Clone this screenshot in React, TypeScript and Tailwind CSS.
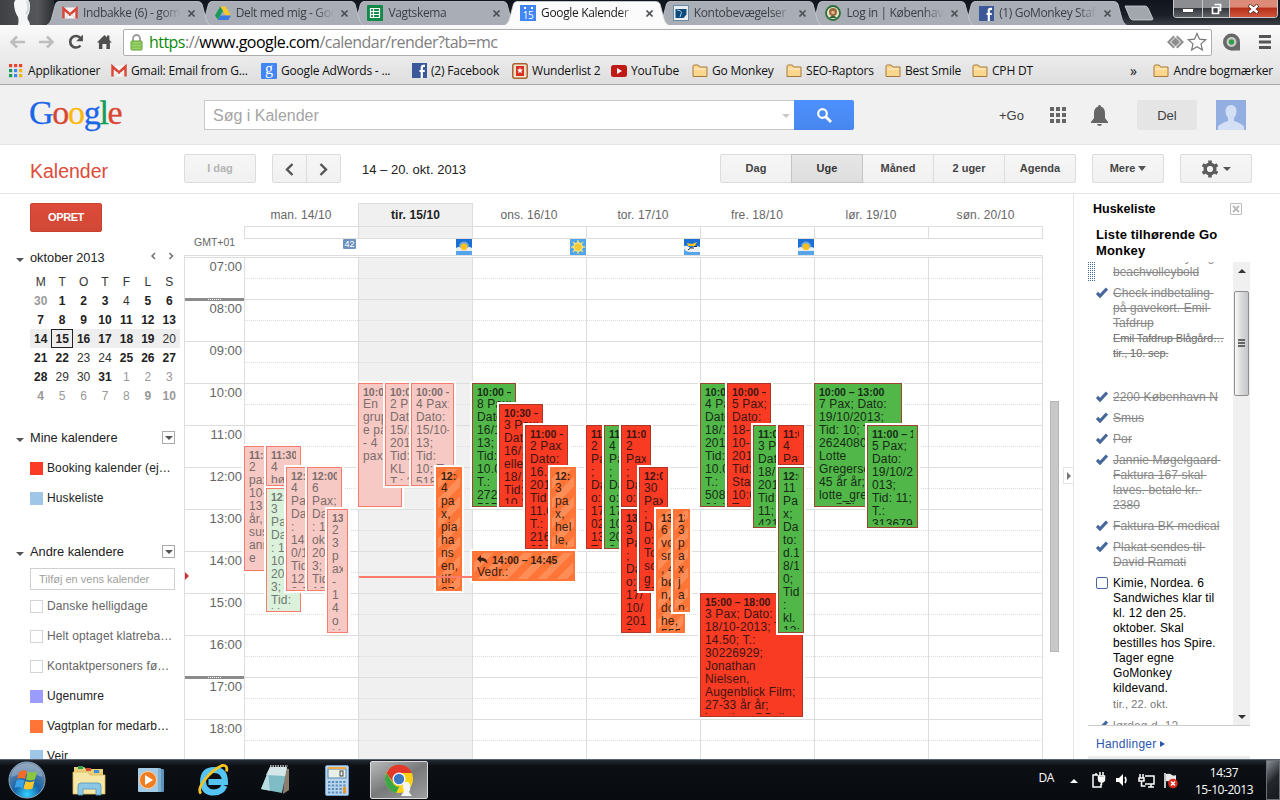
import React from "react";

type Kids = { children?: React.ReactNode };

/* ---------- small icons ---------- */

const Gmail = () => (
  <svg width="16" height="16" viewBox="0 0 16 16">
    <rect x="1" y="2.5" width="14" height="11" fill="#f4f4f4" />
    <path d="M1.500 13.500V3.500L8 9.500l6.500-6v10" fill="none" stroke="#d94537" strokeWidth="2.400" />
    <path d="M3 13l4-4M13 13L9 9" stroke="#ccc" strokeWidth="0.800" />
  </svg>
);
const Drive = () => (
  <svg width="16" height="16" viewBox="0 0 16 16">
    <path d="M5.300 1.500h5.200L16 10.500h-5.300z" fill="#fbc82b" />
    <path d="M5.300 1.500L8 6 2.800 14.800 0 10.300z" fill="#1c9a59" />
    <path d="M5.500 10.500H16l-2.700 4.400H2.800z" fill="#3b78e0" />
  </svg>
);
const Sheets = () => (
  <svg width="16" height="16" viewBox="0 0 16 16">
    <rect width="16" height="16" rx="1" fill="#0f8a47" />
    <path d="M3.500 3.500h9v9h-9zM3.500 6.500h9M3.500 9.500h9M6.500 3.500v9" fill="none" stroke="#fff" strokeWidth="1.200" />
  </svg>
);
const CalIcon = () => (
  <div className="flex h-4 w-4 flex-col items-center bg-[#4285f4] text-white">
    <div className="mt-[2px] flex gap-[5px]">
      <i className="h-[2px] w-[2px] bg-white" />
      <i className="h-[2px] w-[2px] bg-white" />
    </div>
    <span className="text-[10px] leading-[12px] tracking-[-0.300px]">15</span>
  </div>
);
const Konto = () => (
  <svg width="16" height="16" viewBox="0 0 16 16">
    <rect x="0.500" y="0.500" width="15" height="15" fill="#e8eef2" stroke="#6b8ba3" />
    <path d="M2.500 4h11v5.500l-3 3.500h-8z" fill="#0c4a7d" />
    <path d="M4 5q4 0 4.500 2.500L7 12" stroke="#bcd3e4" strokeWidth="0.900" fill="none" />
  </svg>
);
const Login = () => (
  <svg width="16" height="16" viewBox="0 0 16 16">
    <circle cx="8" cy="8" r="7" fill="#e9e2c8" stroke="#2c6e3c" strokeWidth="1.800" />
    <circle cx="8" cy="7" r="4" fill="#9a6a3c" />
    <path d="M4 13q4-5 8 0z" fill="#39633c" />
    <circle cx="8" cy="7.500" r="1.800" fill="#e4b88c" />
  </svg>
);
const Facebook = () => (
  <svg width="15" height="15" viewBox="0 0 15 15">
    <rect width="15" height="15" fill="#3b5998" />
    <path d="M13 2.800h-1.500q-1.700 0-1.700 1.700V15M7.500 8h5.300" fill="none" stroke="#fff" strokeWidth="2.200" />
  </svg>
);
const Folder = () => (
  <svg width="16" height="14" viewBox="0 0 16 14">
    <path d="M1 2.500Q1 1 2.200 1h4l1.500 2H15v9.500H1z" fill="#fcd68c" stroke="#a87b3f" />
    <path d="M2 5h12" stroke="#fff2d0" />
  </svg>
);
const AppsDots = () => (
  <svg width="14" height="14" viewBox="0 0 14 14">
    {["#e8432f", "#e8432f", "#e8432f", "#0f9d58", "#4285f4", "#f4b400", "#0f9d58", "#4285f4", "#f4b400"].map((c, i) => (
      <rect key={i} x={(i % 3) * 5} y={Math.floor(i / 3) * 5} width="3.200" height="3.200" fill={c} />
    ))}
  </svg>
);
const Adwords = () => (
  <div className="flex h-4 w-4 items-center justify-center rounded-[1px] bg-[#4285f4] font-['Liberation_Serif',serif] text-[16px] leading-none text-white">
    <span className="-mt-[3px]">g</span>
  </div>
);
const Wunder = () => (
  <svg width="16" height="16" viewBox="0 0 16 16">
    <rect x="0.800" y="0.800" width="14.400" height="14.400" rx="2" fill="#f3e3cf" stroke="#a8622f" strokeWidth="1.500" />
    <rect x="4" y="3" width="8" height="10" fill="#d9301f" />
    <path d="M8 4.500l.9 2 2.100.1-1.600 1.400.5 2.200L8 9l-1.900 1.200.5-2.200L5 6.600l2.100-.1z" fill="#fff" />
  </svg>
);
const Youtube = () => (
  <svg width="16" height="14" viewBox="0 0 16 14">
    <rect y="1" width="16" height="12" rx="2.500" fill="#c01a17" />
    <path d="M6 4l5 3-5 3z" fill="#fff" />
  </svg>
);
const Weather = ({ kind }: { kind: "sun" | "haze" | "cloud" }) => (
  <svg width="16" height="16" viewBox="0 0 16 16" className="absolute right-0 top-0">
    <rect width="16" height="16" fill={kind === "sun" ? "#4fa6ea" : "#1b6fd6"} />
    <rect y="11" width="16" height="5" fill="#56a5ea" />
    {kind === "sun" && (
      <g>
        <rect y="10" width="16" height="6" fill="#4fa6ea" />
        <path d="M8 1v14M1 8h14M3 3l10 10M13 3L3 13" stroke="#f7dd62" strokeWidth="1.300" />
        <circle cx="8" cy="8" r="4.300" fill="#f9c936" stroke="#fff0a0" />
      </g>
    )}
    {kind === "haze" && (
      <g>
        <circle cx="8" cy="7.500" r="5" fill="#6fa8d8" />
        <path d="M0 9q3-2 5 0h6q2-2 5 0v3H0z" fill="#e8edf0" />
        <circle cx="8" cy="7.800" r="3.400" fill="#fcbf1c" />
      </g>
    )}
    {kind === "cloud" && (
      <g>
        <path d="M3 4l5 1 5-2-2 4H4z" fill="#fcc41c" />
        <path d="M0 7q3-1 5 1 2 2 4 0 3-2 7 0v5H5Q1 12 0 10z" fill="#eef0f2" />
        <path d="M4 11q2-3 6-2M10 7.500h3" stroke="#26343f" fill="none" />
      </g>
    )}
  </svg>
);

/* ---------- browser chrome ---------- */

const tabs = [
  { t: "Indbakke (6) - gomonkey", i: <Gmail /> },
  { t: "Delt med mig - Google", i: <Drive /> },
  { t: "Vagtskema", i: <Sheets /> },
  { t: "Google Kalender", i: <CalIcon />, active: true },
  { t: "Kontobevægelser | Ny", i: <Konto /> },
  { t: "Log in | København K", i: <Login /> },
  { t: "(1) GoMonkey Staff", i: <Facebook /> },
];
const tabZ = ["z-[7]", "z-[6]", "z-[5]", "z-[9]", "z-[4]", "z-[3]", "z-[2]"];

function TabStrip() {
  return (
    <div className="flex h-[25px] shrink-0 bg-[linear-gradient(#10141d,#1a1e27_60%,#3a3f46)] font-['Open_Sans',sans-serif]">
      <div className="h-full w-[54px] bg-[linear-gradient(90deg,#3f4144,#55575a_70%,#2a2d31)]">
        <svg width="54" height="25" viewBox="0 0 54 25">
          <path d="M14 3Q15-2 22-2q8 0 8 7 0 8-2 10-1 3 0 5 2 2 2 5H18q1-5 0-8-4-6-4-14z" fill="#f4f6f8" />
          <path d="M27 1q3 8-1 13" stroke="#cfd6dc" strokeWidth="2" fill="none" />
        </svg>
      </div>
      {tabs.map((tab, n) => (
        <div key={n} className={`relative flex h-[25px] w-[152.700px] items-center ${tabZ[n]}`}>
          <svg className="absolute -left-[7px] top-0" width="164" height="25" viewBox="0 0 164 25">
            <path
              d="M0 25Q3 24 4.500 19L8.500 4Q9.500 1.500 12 1.500H151Q154 1.500 155 4L159 19Q160.500 24 163.500 25"
              fill={tab.active ? "#fbfbfb" : "#a9aeb6"}
              stroke={tab.active ? "#d7d9dc" : "#c9cdd2"}
              strokeWidth="0.800"
            />
          </svg>
          <div className="relative ml-2 mt-[1px] flex h-4 w-4 items-center justify-center">{tab.i}</div>
          <div
            className={`relative ml-[5px] mt-[1px] w-[98px] overflow-hidden whitespace-nowrap text-[12px] tracking-[-0.350px] [mask-image:linear-gradient(90deg,#000_80%,transparent)] ${n === 4 ? "tracking-[-0.200px]" : ""} ${tab.active ? "text-[#1a1a1a]" : "text-[#3b3e44]"}`}
          >
            {tab.t}
          </div>
          <svg className="relative ml-[6px] mt-[2px]" width="9" height="9" viewBox="0 0 9 9">
            <path d="M1.500 1.500l6 6M7.500 1.500l-6 6" stroke="#4a4d52" strokeWidth="1.700" />
          </svg>
        </div>
      ))}
      <svg className="-ml-px mt-[5px]" width="36" height="16" viewBox="0 0 36 16">
        <path d="M3 1h20q2 0 3 2l5 11q0 1-2 1H11q-2 0-3-2z" fill="#a2a7ae" stroke="#d0d3d7" strokeWidth="0.800" />
      </svg>
      <div className="ml-auto mr-[2px] flex h-[18px] overflow-hidden rounded-b-[4px] border border-t-0 border-[#c5c7ca]">
        <div className="flex w-[29px] items-center justify-center border-r border-[#c5c7ca] bg-[linear-gradient(#8b8d91_45%,#33363b_50%,#5f6266)]">
          <i className="mt-[3px] h-[5px] w-[12px] rounded-[1px] border border-[#444] bg-white" />
        </div>
        <div className="flex w-[27px] items-center justify-center border-r border-[#c5c7ca] bg-[linear-gradient(#8b8d91_45%,#33363b_50%,#5f6266)]">
          <svg width="13" height="12" viewBox="0 0 13 12">
            <path d="M4.500 1.500h6v6h-2M2.500 4.500h6v6h-6z" fill="none" stroke="#fff" strokeWidth="1.700" />
          </svg>
        </div>
        <div className="flex w-[47px] items-center justify-center bg-[linear-gradient(#dd8b78_40%,#b8301a_50%,#d1553c)]">
          <svg width="13" height="10" viewBox="0 0 13 10">
            <path d="M2 1l9 8M11 1L2 9" stroke="#5c2b22" strokeWidth="4" />
            <path d="M2.500 1.500l8 7M10.500 1.500l-8 7" stroke="#fff" strokeWidth="2.400" />
          </svg>
        </div>
      </div>
    </div>
  );
}

const bookmarks = [
  { t: "Applikationer", i: <AppsDots />, w: "w-[103px]" },
  { t: "Gmail: Email from G...", i: <Gmail />, w: "w-[150px]" },
  { t: "Google AdWords - ...", i: <Adwords />, w: "w-[150px]" },
  { t: "(2) Facebook", i: <Facebook />, w: "w-[101px]" },
  { t: "Wunderlist 2", i: <Wunder />, w: "w-[99px]" },
  { t: "YouTube", i: <Youtube />, w: "w-[81px]" },
  { t: "Go Monkey", i: <Folder />, w: "w-[94px]" },
  { t: "SEO-Raptors", i: <Folder />, w: "w-[99px]" },
  { t: "Best Smile", i: <Folder />, w: "w-[87px]" },
  { t: "CPH DT", i: <Folder />, w: "w-[90px]" },
];

function Toolbar() {
  return (
    <div className="h-[60px] shrink-0 border-b border-[#a6a6a6] bg-[linear-gradient(#fafafa,#dedede)] font-['Open_Sans',sans-serif]">
      <div className="flex h-[34px] items-center">
        <svg className="ml-[8px]" width="108" height="20" viewBox="0 0 108 20">
          <path d="M17 10H4M9 4.500L3.500 10 9 15.500" fill="none" stroke="#bdbdbd" strokeWidth="2.500" />
          <path d="M31 10h13M39 4.500l5.500 5.500-5.500 5.500" fill="none" stroke="#bdbdbd" strokeWidth="2.500" />
          <path d="M72.500 13.500a5.800 5.800 0 1 1 0-7.500" fill="none" stroke="#4f4f4f" strokeWidth="2.600" />
          <path d="M75 2.500v6.700h-6.700z" fill="#4f4f4f" />
          <path d="M89 10.500L96.500 3l2.500 2.500V3.500h2.500V8l2.500 2.500H102V17h-3.500v-5h-4v5H91v-6.500z" fill="#4f4f4f" />
        </svg>
        <div className="ml-[7px] flex h-[27px] w-[1090px] items-center rounded-[2px] border border-[#aeaeae] bg-white">
          <svg className="ml-[6px]" width="13" height="17" viewBox="0 0 13 17">
            <path d="M3 8V4.500a3.500 3.500 0 0 1 7 0V8" fill="none" stroke="#9a9a9a" strokeWidth="1.800" />
            <rect x="1" y="7" width="11" height="9" rx="1" fill="#9bd36a" stroke="#5d9d36" />
            <path d="M2 10h9M2 13h9" stroke="#76b848" />
          </svg>
          <div className="ml-[6px] whitespace-nowrap text-[16px] leading-5 tracking-[-0.520px] text-[#808080]">
            <span className="text-[#0b8a0b]">https</span>://<span className="text-black">www.google.com</span>/calendar/render?tab=mc
          </div>
          <svg className="ml-auto mr-px" width="44" height="20" viewBox="0 0 44 20">
            <path d="M7.500 3.500L1 10l6.500 6.500L9 15l-5-5 5-5z" fill="#8d8d8d" />
            <path d="M11.500 3.500L18 10l-6.500 6.500L10 15l5-5-5-5z" fill="#8d8d8d" />
            <path d="M9.500 5.500L14 10l-4.500 4.500L5 10z" fill="#8d8d8d" />
            <path d="M31 1.500l2.500 5.700 6.200.6-4.700 4.100 1.400 6.100-5.400-3.200-5.400 3.200 1.400-6.100-4.700-4.100 6.200-.6z" fill="#fff" stroke="#777" strokeWidth="1.200" />
          </svg>
        </div>
        <svg className="ml-[10px]" width="58" height="20" viewBox="0 0 58 20">
          <circle cx="9.500" cy="10" r="8.500" fill="#686868" />
          <path d="M12 10h6v8.500H9z" fill="#686868" />
          <circle cx="9.500" cy="10" r="5" fill="#c9c9c9" />
          <circle cx="9.500" cy="10" r="2.700" fill="#2f9e46" />
          <path d="M37 4.500h12M37 10h12M37 15.500h12" stroke="#555" strokeWidth="3" />
        </svg>
      </div>
      <div className="flex h-[23px] items-center pl-[8px] text-[12px] tracking-[-0.200px] text-[#111]">
        {bookmarks.map((b) => (
          <div key={b.t} className={`flex shrink-0 items-center whitespace-nowrap ${b.w}`}>
            <span className="flex w-[16px] justify-center">{b.i}</span>
            <span className="ml-[4px]">{b.t}</span>
          </div>
        ))}
        <span className="ml-[68px] text-[14px]">»</span>
        <span className="ml-auto flex items-center whitespace-nowrap pr-[7px]">
          <Folder />
          <span className="ml-[5px]">Andre bogmærker</span>
        </span>
      </div>
    </div>
  );
}

/* ---------- Google header ---------- */

function Header() {
  return (
    <div className="flex h-[60px] shrink-0 items-start border-b border-[#e5e5e5] bg-[#f1f1f1] text-[13px] text-[#404040]">
      <div className="ml-[29px] mt-[6px] w-[175px] font-['Liberation_Serif',serif] text-[34px] leading-[44px] tracking-[-1.300px] [-webkit-text-stroke:0.300px]">
        <span className="text-[#1b66e8]">G</span>
        <span className="text-[#da4531]">o</span>
        <span className="text-[#fbb80b]">o</span>
        <span className="text-[#1b66e8]">g</span>
        <span className="text-[#0f9d58]">l</span>
        <span className="text-[#da4531]">e</span>
      </div>
      <div className="mt-[15px] flex h-[30px] w-[590px] items-center border border-r-0 border-[#c8c8c8] bg-white pl-[8px] pt-px text-[16px] text-[#a5a5a5]">
        Søg i Kalender
        <i className="ml-auto mr-[4px] border-x-[4px] border-t-[4px] border-x-transparent border-t-[#c8c8c8]" />
      </div>
      <div className="mt-[15px] flex h-[30px] w-[60px] items-center justify-center rounded-r-[2px] bg-[linear-gradient(#4d90fe,#4787ed)]">
        <svg width="17" height="17" viewBox="0 0 17 17">
          <circle cx="6.500" cy="6.500" r="4.300" fill="none" stroke="#fff" strokeWidth="2.200" />
          <path d="M9.500 9.500l5.500 5.500" stroke="#fff" strokeWidth="2.800" />
        </svg>
      </div>
      <span className="ml-[145px] mt-[23px] leading-4">+Go</span>
      <svg className="ml-[26px] mt-[22px]" width="16" height="16" viewBox="0 0 16 16" fill="#666">
        {[0, 1, 2, 3, 4, 5, 6, 7, 8].map((i) => (
          <rect key={i} x={(i % 3) * 6} y={Math.floor(i / 3) * 6} width="4" height="4" />
        ))}
      </svg>
      <svg className="ml-[24px] mt-[20px]" width="19" height="22" viewBox="0 0 19 22" fill="#666">
        <path d="M9.500 0q1.500 0 1.600 1.800Q15 3 15 8v5l3 4v1H1v-1l3-4V8q0-5 3.900-6.200Q8 0 9.500 0zM7 19h5q-.5 2-2.500 2T7 19z" />
      </svg>
      <div className="ml-[28px] mt-[15px] flex h-[30px] w-[60px] items-center justify-center rounded-[2px] bg-[#e5e5e5] pt-px">Del</div>
      <svg className="ml-[19px] mt-[15px]" width="30" height="30" viewBox="0 0 30 30">
        <rect width="30" height="30" fill="#93aee0" />
        <path d="M15 5q5.500 0 5.500 6.500 0 4-2.500 6.500v3q7 2 10 5.500V30H2v-3.500Q5 23 12 21v-3q-2.500-2.500-2.500-6.500Q9.500 5 15 5z" fill="#d3dff5" />
      </svg>
    </div>
  );
}

const btn =
  "flex h-[29px] items-center justify-center border border-[#dcdcdc] bg-[linear-gradient(#f6f6f6,#f1f1f1)] text-[11px] font-bold text-[#444]";
const Down = () => <i className="ml-[3px] border-x-[4px] border-t-[5px] border-x-transparent border-t-[#555]" />;

function ActionBar() {
  return (
    <div className="flex h-[49px] shrink-0 items-start border-b border-[#e5e5e5] pt-[9px]">
      <div className="ml-[30px] mt-[5px] w-[154px] text-[19.500px] leading-[24px] text-[#dd4b39]">Kalender</div>
      <div className={`${btn} w-[72px] rounded-[2px] !text-[#b4b4b4]`}>I dag</div>
      <div className={`${btn} ml-[16px] w-[35px] rounded-l-[2px]`}>
        <svg className="mt-[2px]" width="9" height="13" viewBox="0 0 9 13"><path d="M7.500 1L2 6.500 7.500 12" fill="none" stroke="#555" strokeWidth="2.400" /></svg>
      </div>
      <div className={`${btn} -ml-px w-[35px] rounded-r-[2px]`}>
        <svg className="mt-[2px]" width="9" height="13" viewBox="0 0 9 13"><path d="M1.500 1L7 6.500 1.500 12" fill="none" stroke="#555" strokeWidth="2.400" /></svg>
      </div>
      <div className="ml-[21px] mt-[8px] w-[358px] text-[13px] leading-4 text-[#222]">14 – 20. okt. 2013</div>
      <div className={`${btn} w-[72px] rounded-l-[2px]`}>Dag</div>
      <div className="z-[1] -ml-px flex h-[29px] w-[72px] items-center justify-center border border-[#c4c4c4] bg-[linear-gradient(#e6e6e6,#dedede)] text-[11px] font-bold text-[#333]">
        Uge
      </div>
      <div className={`${btn} -ml-px w-[72px]`}>Måned</div>
      <div className={`${btn} -ml-px w-[72px]`}>2 uger</div>
      <div className={`${btn} -ml-px w-[72px] rounded-r-[2px]`}>Agenda</div>
      <div className={`${btn} ml-[16px] w-[72px] rounded-[2px]`}>
        Mere
        <Down />
      </div>
      <div className={`${btn} ml-[16px] w-[72px] rounded-[2px]`}>
        <svg width="18" height="18" viewBox="0 0 18 18">
          <circle cx="9" cy="9" r="4.800" fill="none" stroke="#5c5c5c" strokeWidth="3.400" />
          <path d="M9 .5v3M9 14.500v3M1.600 4.800l2.700 1.500M13.700 11.700l2.700 1.500M1.600 13.200l2.700-1.500M13.700 6.300l2.700-1.500" stroke="#5c5c5c" strokeWidth="3.600" />
        </svg>
        <i className="ml-[4px] border-x-[4px] border-t-[4px] border-x-transparent border-t-[#555]" />
      </div>
    </div>
  );
}

/* ---------- sidebar ---------- */

type D = [string, string];
const B = "font-bold text-[#222]";
const N = "text-[#333]";
const GB = "font-bold text-[#999]";
const G = "text-[#999]";
const weeks: D[][] = [
  [["30", GB], ["1", B], ["2", B], ["3", B], ["4", N], ["5", B], ["6", B]],
  [["7", B], ["8", B], ["9", B], ["10", B], ["11", B], ["12", B], ["13", B]],
  [["14", B], ["15", B], ["16", B], ["17", B], ["18", B], ["19", B], ["20", N]],
  [["21", B], ["22", B], ["23", N], ["24", N], ["25", B], ["26", B], ["27", B]],
  [["28", B], ["29", N], ["30", N], ["31", B], ["1", G], ["2", G], ["3", G]],
  [["4", GB], ["5", G], ["6", G], ["7", G], ["8", G], ["9", GB], ["10", GB]],
];
const Tri = () => <i className="ml-[16px] mr-[6px] mt-[3px] border-x-[4px] border-t-[4px] border-x-transparent border-t-[#555]" />;
const Drop = () => (
  <span className="mr-[9px] ml-auto -mt-px flex h-[13px] w-[13px] items-center justify-center border border-[#aaa]">
    <i className="border-x-[4px] border-t-[4px] border-x-transparent border-t-[#555]" />
  </span>
);
function Cal({ box, t, dim }: { box: string; t: string; dim?: boolean }) {
  return (
    <div className={`flex h-[30px] items-center pl-[30px] text-[12px] tracking-[0.120px] ${dim ? "text-[#666]" : "text-[#222]"}`}>
      <i className={`mr-[4px] h-[13px] w-[13px] ${box}`} />
      {t}
    </div>
  );
}

function Sidebar() {
  return (
    <div className="h-full w-[184px] shrink-0 overflow-hidden pt-[9px]">
      <div className="ml-[30px] flex h-[29px] w-[72px] items-center justify-center rounded-[2px] border border-[#c9402c] bg-[linear-gradient(#dd4b39,#d14836)] text-[11px] font-bold tracking-[-0.400px] text-white">
        OPRET
      </div>
      <div className="mt-[18px] flex h-[16px] items-center text-[12.800px] text-[#222]">
        <Tri />
        oktober 2013
        <svg className="ml-auto mr-[10px] -mt-[5px]" width="24" height="8" viewBox="0 0 24 8">
          <path d="M5 1L2 4l3 3M19.500 1l3 3-3 3" fill="none" stroke="#666" strokeWidth="1.400" />
        </svg>
      </div>
      <div className="mt-[7px] ml-[30px] w-[150px] text-center text-[12px]">
        <div className="grid h-[18px] grid-cols-7 items-center text-[#333]">
          {["M", "T", "O", "T", "F", "L", "S"].map((d, i) => (
            <span key={i}>{d}</span>
          ))}
        </div>
        {weeks.map((w, r) => (
          <div key={r} className={`grid h-[19px] grid-cols-7 ${r === 2 ? "bg-[#eee]" : ""}`}>
            {w.map(([t, c], i) => (
              <span key={i} className={`h-[19px] leading-[20px] ${c} ${r === 2 && i === 1 ? "border border-[#222] !leading-[18px]" : ""}`}>
                {t}
              </span>
            ))}
          </div>
        ))}
      </div>
      <div className="mt-[25px] flex h-[16px] items-center text-[12.800px] text-[#222]">
        <Tri />
        Mine kalendere
        <Drop />
      </div>
      <div className="mt-[7px]">
        <Cal box="bg-[#fa3b26]" t="Booking kalender (ej…" />
        <Cal box="bg-[#9fc6e7]" t="Huskeliste" />
      </div>
      <div className="mt-[31px] flex h-[16px] items-center text-[12.800px] text-[#222]">
        <Tri />
        Andre kalendere
        <Drop />
      </div>
      <div className="mt-[8px] ml-[30px] flex h-[22px] w-[145px] items-center border border-[#d0d0d0] pl-[8px] text-[11px] text-[#a0a0a0]">
        Tilføj en vens kalender
      </div>
      <div className="mt-[1px]">
        <Cal dim box="border border-[#d5d5d5]" t="Danske helligdage" />
        <Cal dim box="border border-[#d5d5d5]" t="Helt optaget klatreba…" />
        <Cal dim box="border border-[#d5d5d5]" t="Kontaktpersoners fø…" />
        <Cal box="bg-[#9a9cff]" t="Ugenumre" />
        <Cal box="bg-[#ff7537]" t="Vagtplan for medarb…" />
        <Cal box="bg-[#9fc6e7]" t="Vejr" />
      </div>
    </div>
  );
}

/* ---------- week grid ---------- */

type Ev = { p: string; c: keyof typeof tone; h: string; b: string; reply?: boolean };
const tone = {
  pr: "border-[#f87c6d] bg-[#f6c9c4] text-[#7b6c6b]",
  pg: "border-[#f87c6d] bg-[#dcf1db] text-[#6f7a6f]",
  g: "border-[#9c4430] bg-[#51b749] text-[#162c15]",
  r: "border-[#ab3626] bg-[#fa3b24] text-[#401410]",
  o: "border-[#ff7537] text-[#3b1f12] bg-[repeating-linear-gradient(135deg,#ff7537_0_7px,#ff8d58_7px_14px)] !border-[2px] !px-[3px] !pb-0",
};

/* Position is measured from the top left of the hour canvas: left, top, width, height. */
const events: Ev[] = [
  { p: "left-0 top-[189px] w-[35px] h-[125px]", c: "pr", h: "11:30", b: "2|pax|10-|13|år,|sus|ann|e" },
  { p: "left-[22px] top-[189px] w-[35px] h-[40px]", c: "pr", h: "11:30", b: "4|bø" },
  { p: "left-[22px] top-[231px] w-[35px] h-[124px]", c: "pg", h: "12:30", b: "3|Pax;|Dato|: 14-|10-|201|3;|Tid:|kl." },
  { p: "left-[42px] top-[210px] w-[35px] h-[124px]", c: "pr", h: "12:00", b: "4|Pax;|Dato|:|14-1|0/13|Tid:|12.0|2.2." },
  { p: "left-[63px] top-[210px] w-[35px] h-[124px]", c: "pr", h: "12:00", b: "6|Pax;|Dato|: 15.|okt.|201|3;|Tid:|12.0" },
  { p: "left-[83px] top-[252px] w-[21px] h-[124px]", c: "pr", h: "13:00", b: "2|3|p|ax|-|1|4|o|kl" },
  { p: "left-[114px] top-[126px] w-[44px] h-[124px]", c: "pr", h: "10:00 –", b: "En|grupp|e på|- 4|pax" },
  { p: "left-[141px] top-[126px] w-[44px] h-[103px]", c: "pr", h: "10:00 –", b: "2 Pax|Dato|15/10|2013|Tid:|KL|T.: 2" },
  { p: "left-[167px] top-[126px] w-[43px] h-[103px]", c: "pr", h: "10:00 –", b: "4 Pax;|Dato:|15/10-|13;|Tid:|10; T.|5187" },
  { p: "left-[192px] top-[210px] w-[26px] h-[124px]", c: "o", h: "12:00", b: "4|pa|x,|pia|ha|ns|en,|tlf.|27" },
  { p: "left-[228px] top-[126px] w-[44px] h-[124px]", c: "g", h: "10:00 –", b: "8 Pax;|Dato:|16/10-|13;|Tid:|10.00|T.:|2720|5053" },
  { p: "left-[255px] top-[147px] w-[44px] h-[103px]", c: "r", h: "10:30 –", b: "3 Pax;|Dato:|16/10|eller|18/10|Tid:|10.3" },
  { p: "left-[281px] top-[168px] w-[43px] h-[124px]", c: "r", h: "11:00 –", b: "2 Pax;|Dato:|16.10|2013|Tid:|11.00|T.:|2160|2222" },
  { p: "left-[306px] top-[210px] w-[26px] h-[82px]", c: "o", h: "12:00", b: "3|pa|x,|hel|le," },
  { p: "left-[228px] top-[294px] w-[103px] h-[30px]", c: "o", h: "14:00 – 14:45", b: "Vedr.:", reply: true },
  { p: "left-[342px] top-[168px] w-[30px] h-[124px]", c: "r", h: "11:00", b: "2|Pax|;|Dat|o:|17-|02|13;|T.:" },
  { p: "left-[360px] top-[168px] w-[30px] h-[124px]", c: "g", h: "11:00", b: "4|Pax|;|Dat|o:|17/|10-|201|3;" },
  { p: "left-[377px] top-[168px] w-[30px] h-[82px]", c: "r", h: "11:00", b: "2|Pax|;|Dat|o:" },
  { p: "left-[377px] top-[252px] w-[30px] h-[124px]", c: "r", h: "13:00", b: "3|Pax|;|Dat|o:|17/|10/|201|3;" },
  { p: "left-[395px] top-[210px] w-[29px] h-[124px]", c: "r", h: "12:00", b: "30|Pax|;|Dat|o:|Tor|so|g|55" },
  { p: "left-[412px] top-[252px] w-[29px] h-[124px]", c: "o", h: "13:00", b: "6|vok|sn|, 4|bør|n,|dor|he,|555" },
  { p: "left-[429px] top-[252px] w-[17px] h-[103px]", c: "o", h: "13:00", b: "3|p|a|x.|j|a|n" },
  { p: "left-[456px] top-[336px] w-[103px] h-[124px]", c: "r", h: "15:00 – 18:00", b: "3 Pax; Dato:|18/10-2013; Tid:|14.50; T.:|30226929;|Jonathan|Nielsen,|Augenblick Film;|27-33 år år;|jonathan@5.dk" },
  { p: "left-[456px] top-[126px] w-[44px] h-[124px]", c: "g", h: "10:00 –", b: "4 Pax;|Dato:|18/10|2013|Tid:|10.00|T.:|5080|21 b" },
  { p: "left-[483px] top-[126px] w-[44px] h-[124px]", c: "r", h: "10:00 –", b: "5 Pax;|Dato:|18-|10-|2013|Tid:|Start|10:00|T.:" },
  { p: "left-[509px] top-[168px] w-[43px] h-[103px]", c: "g", h: "11:00 –", b: "3 Pax|Dato|18/10|2013|Tid:|11;|4215" },
  { p: "left-[534px] top-[168px] w-[26px] h-[40px]", c: "r", h: "11:00", b: "4|Pax" },
  { p: "left-[534px] top-[210px] w-[26px] h-[166px]", c: "g", h: "12:00", b: "11|Pa|x;|Da|to:|d.1|8/1|0;|Tid|:|kl.|12:" },
  { p: "left-[570px] top-[126px] w-[88px] h-[124px]", c: "g", h: "10:00 – 13:00", b: "7 Pax; Dato:|19/10/2013;|Tid: 10; T.:|26240808;|Lotte|Gregersen;|45 år år;|lotte_gregers|en@5b.dk" },
  { p: "left-[623px] top-[168px] w-[51px] h-[103px]", c: "g", h: "11:00 – 14:00", b: "5 Pax;|Dato:|19/10/2|013;|Tid: 11;|T.:|313679" },
];

function Event({ e }: { e: Ev }) {
  return (
    <div className={`absolute overflow-hidden whitespace-nowrap border px-[4px] pb-[2px] shadow-[0_0_0_2px_#fff] ${e.p} ${tone[e.c]}`}>
      <div className="h-full overflow-hidden">
        <div className={`flex items-center text-[10.500px] font-bold leading-[12px] ${e.c === "o" ? "h-[13px]" : "h-[14px] pt-[2px]"}`}>
          {e.reply && (
            <svg className="mr-[4px]" width="11" height="9" viewBox="0 0 11 9">
              <path d="M4 0v2.500q6 0 6.500 6Q8 5.500 4 5.700V8L0 4z" fill="currentColor" />
            </svg>
          )}
          {e.h}
        </div>
        <div className="text-[12px] leading-[13px] tracking-[0.150px]">
          {e.b.split("|").map((l, i) => (
            <div key={i}>{l}</div>
          ))}
        </div>
      </div>
    </div>
  );
}

const days = ["man. 14/10", "tir. 15/10", "ons. 16/10", "tor. 17/10", "fre. 18/10", "lør. 19/10", "søn. 20/10"];
const hours = ["07:00", "08:00", "09:00", "10:00", "11:00", "12:00", "13:00", "14:00", "15:00", "16:00", "17:00", "18:00"];
const kinds = [null, "haze", "sun", "cloud", "haze", null, null] as const;
const Handle = ({ y }: { y: string }) => (
  <div className={`absolute left-0 flex h-[3px] w-[59px] items-center justify-center bg-[#8b8b8b] ${y}`}>
    <i className="h-px w-[14px] bg-[repeating-linear-gradient(90deg,#fff_0_1px,transparent_1px_2px)]" />
  </div>
);

function Week() {
  return (
    <div className="flex h-full w-[859px] shrink-0 flex-col pt-[9px]">
      <div className="flex shrink-0">
        <div className="w-[60px] pl-[10px] pt-[33px] text-[10.500px] leading-[13px] text-[#666]">GMT+01</div>
        {days.map((d, i) => (
          <div key={d} className={`w-[114px] text-center text-[12px] ${i === 6 ? "!w-[115px]" : ""}`}>
            <div className={`h-[23px] leading-[24px] tracking-[0.120px] ${i === 1 ? "-mr-px border-x border-t border-[#ddd] bg-[#f0f0f0] !leading-[22px] font-bold text-[#222]" : "text-[#666]"}`}>
              {d}
            </div>
            <div className={`h-[13px] border-y border-l border-[#ddd] ${i === 6 ? "border-r" : ""} ${i === 1 ? "bg-[#f0f0f0]" : ""}`} />
            <div className="relative h-[16px]">
              {kinds[i] && <Weather kind={kinds[i]!} />}
              {i === 0 && (
                <span className="absolute right-[2px] top-0 h-[10px] w-[13px] rounded-[1px] bg-[#6f93bf] text-[9px] leading-[10px] text-white">42</span>
              )}
            </div>
          </div>
        ))}
      </div>
      <div className="h-[3px] shrink-0 border border-[#ddd] bg-white" />
      <div className="relative min-h-0 flex-1 overflow-hidden border-x border-[#ddd]">
        {hours.map((h) => (
          <div key={h} className="flex h-[42px]">
            <div className="h-[42px] w-[59px] shrink-0 border-b border-[#ddd] pr-[2px] text-right text-[13px] leading-[17px] text-[#666]">{h}</div>
            {days.map((d, n) => (
              <div key={d} className={`h-[42px] w-[114px] shrink-0 border-b border-l border-[#ddd] ${n === 1 ? "bg-[#f0f0f0]" : ""}`}>
                <div className="h-[21px] border-b border-dotted border-[#ddd]" />
              </div>
            ))}
          </div>
        ))}
        <Handle y="top-[40px]" />
        <Handle y="top-[418px]" />
        <i className="absolute left-0 top-[314px] border-y-[4px] border-l-[4px] border-y-transparent border-l-[#d12f2f]" />
        <div className="absolute left-[59px] top-[-1px] h-[504px] w-[798px]">
          {events.map((e, i) => (
            <Event key={i} e={e} />
          ))}
          <i className="absolute left-[115px] top-[319px] h-[2px] w-[113px] bg-[#ff7b6b]" />
        </div>
      </div>
    </div>
  );
}

/* ---------- tasks panel ---------- */

const Check = () => (
  <svg className="mr-[5px] mt-[1px] shrink-0" width="12" height="11" viewBox="0 0 12 11">
    <path d="M1 6l3 3L11 1.500" fill="none" stroke="#46689c" strokeWidth="3.200" />
  </svg>
);
function Task({ lines, notes, className = "" }: { lines: string[]; notes?: string[]; className?: string }) {
  return (
    <div className={`mb-[6px] flex ${className}`}>
      <Check />
      <div className="whitespace-nowrap text-[12px] leading-[15px] tracking-[0.100px] text-[#888] line-through">
        {lines.map((l) => (
          <div key={l}>{l}</div>
        ))}
        {notes?.map((l) => (
          <div key={l} className="text-[11px] tracking-[-0.100px] text-[#666]">{l}</div>
        ))}
      </div>
    </div>
  );
}

function Tasks() {
  return (
    <div className="ml-auto flex h-full w-[207px] shrink-0 flex-col border-l border-[#e5e5e5] pt-[8px] text-black">
      <div className="flex h-[15px] items-center pl-[19px] text-[12.500px] font-bold">
        Huskeliste
        <span className="ml-auto mr-[38px] -mt-[2px] flex h-[12px] w-[12px] items-center justify-center rounded-[1px] border border-[#bbb]">
          <svg width="8" height="8" viewBox="0 0 8 8"><path d="M1 1l6 6M7 1L1 7" stroke="#bbb" strokeWidth="2" /></svg>
        </span>
      </div>
      <div className="mt-[10px] h-[35px] pl-[22px] text-[13px] font-bold leading-[16px] tracking-[0.150px]">
        Liste tilhørende Go
        <br />
        Monkey
      </div>
      <div className="ml-[14px] flex h-[465px] w-[162px] border-b border-[#ccc] pt-px">
        <div className="relative h-full w-[145px] overflow-hidden">
          <svg className="absolute left-0 top-0" width="8" height="20" viewBox="0 0 8 20" fill="#46689c">
            {Array.from({ length: 40 }, (_, i) => (
              <rect key={i} x={(i % 4) * 2} y={Math.floor(i / 4) * 2} width="1" height="1" />
            ))}
          </svg>
          <div className="-mt-[12px] pl-[8px]">
            <div className="mb-[6px] pl-[17px] text-[12px] leading-[15px] text-[#888] line-through">
              <div className="pl-[40px]">Køb ny bag</div>
              beachvolleybold
            </div>
            <Task lines={["Check indbetaling\u00a0", "på gavekort. Emil\u00a0", "Tafdrup"]} notes={["Emil Tafdrup Blågård…", "tir., 10. sep."]} className="!mb-[29px]" />
            <Task lines={["2200 København N"]} />
            <Task lines={["Smus"]} />
            <Task lines={["Por"]} />
            <Task lines={["Jannie Møgelgaard\u00a0", "Faktura 167 skal\u00a0", "laves. betale kr.\u00a0", "2380"]} />
            <Task lines={["Faktura BK medical"]} />
            <Task lines={["Plakat sendes til\u00a0", "David Ramati"]} />
            <div className="mb-[7px] flex">
              <i className="mr-[5px] mt-[1px] h-[12px] w-[12px] shrink-0 rounded-[2px] border border-[#46689c]" />
              <div className="whitespace-nowrap text-[12px] leading-[15px] tracking-[0.100px]">
                {["Kimie, Nordea. 6", "Sandwiches klar til", "kl. 12 den 25.", "oktober. Skal", "bestilles hos Spire.", "Tager egne", "GoMonkey", "kildevand."].map((l) => (
                  <div key={l}>{l}</div>
                ))}
                <div className="pt-px text-[11px] text-[#777]">tir., 22. okt.</div>
              </div>
            </div>
            <Task lines={["lørdag d. 12"]} />
          </div>
        </div>
        <div className="flex w-[17px] flex-col items-center bg-[#f0f0f0]">
          <i className="mt-[7px] border-x-[4px] border-b-[4px] border-x-transparent border-b-[#333]" />
          <div className="mt-[18px] flex h-[105px] w-[15px] flex-col items-center justify-center gap-[1px] rounded-[2px] border border-[#8d8d8d] bg-[linear-gradient(90deg,#fafafa,#dcdcdc_45%,#c4c6ca)]">
            <i className="h-[2px] w-[7px] bg-[#666]" />
            <i className="h-[2px] w-[7px] bg-[#666]" />
            <i className="h-[2px] w-[7px] bg-[#666]" />
          </div>
          <i className="mt-auto mb-[6px] border-x-[4px] border-t-[4px] border-x-transparent border-t-[#333]" />
        </div>
      </div>
      <div className="flex h-[31px] items-center pl-[22px] pt-[5px] text-[12px] tracking-[0.250px] text-[#2a56ad]">
        Handlinger
        <i className="ml-[3px] border-y-[3px] border-l-[5px] border-y-transparent border-l-[#2a56ad]" />
      </div>
      <div className="ml-[14px] h-[3px] w-[162px] bg-[#ebebeb]" />
    </div>
  );
}

/* ---------- Windows taskbar ---------- */

const Slot = ({ children }: Kids) => <div className="flex h-full w-[62px] items-center justify-center">{children}</div>;

function Taskbar() {
  return (
    <div className="flex h-[41px] shrink-0 items-center border-t border-[#5a6270] bg-[linear-gradient(#252b34,#0c1015_15%,#080b0f)] font-['Open_Sans',sans-serif] text-[12px] text-white">
      <div className="flex h-full w-[58px] items-center pl-[8px]">
        <svg width="38" height="38" viewBox="0 0 38 38">
          <defs>
            <radialGradient id="orb" cx="50%" cy="90%" r="80%">
              <stop offset="0" stopColor="#32d2ff" />
              <stop offset="0.450" stopColor="#1764a8" />
              <stop offset="1" stopColor="#6a87a5" />
            </radialGradient>
          </defs>
          <circle cx="19" cy="19" r="18" fill="url(#orb)" stroke="#8fa9bd" strokeWidth="1" />
          <path d="M3 16Q5 3 19 2q14 1 16 14-16-6-32 0z" fill="#fff" opacity="0.250" />
          <path d="M11 11q4-3 8-1l-2 8q-4-2-8 0z" fill="#f26a2b" />
          <path d="M20 10.500q4 2 9 0l-2 8q-5 2-9 0z" fill="#8cc63f" />
          <path d="M8.500 19.500q4-2 8 0l-2 7.500q-4-2-8 0z" fill="#3aa2e8" />
          <path d="M17.500 20q4 2 9 0l-2 7.500q-5 2-9 0z" fill="#fcc52a" />
        </svg>
      </div>
      <Slot>
        <svg width="34" height="32" viewBox="0 0 34 32">
          <path d="M2 3h10l2 2h17v23H2z" fill="#e9cf78" />
          <path d="M6 2h5v3H6z" fill="#2e9e4f" />
          <path d="M14 4h5v3h-5z" fill="#d34a35" />
          <path d="M22 6h5v3h-5z" fill="#3a8fd8" />
          <path d="M1 8h15l2 3h15v19H1z" fill="#f6e7a6" stroke="#d9b95c" strokeWidth="0.800" />
          <path d="M6 31v-9q0-3 3-3h17q3 0 3 3v9h-5v-6H11v6z" fill="#8cc8e6" stroke="#4f97bd" strokeWidth="0.800" />
        </svg>
      </Slot>
      <Slot>
        <svg width="28" height="28" viewBox="0 0 28 28">
          <rect x="8" y="3" width="19" height="23" rx="1" fill="#5a93bd" />
          <rect x="5" y="2" width="19" height="24" rx="1" fill="#7fb1d2" />
          <rect x="1" y="2" width="20" height="24" rx="1" fill="#a5cce4" />
          <circle cx="11" cy="14" r="8.500" fill="#ef7d22" stroke="#fbd1a5" />
          <path d="M8 9l8 5-8 5z" fill="#fff" />
        </svg>
      </Slot>
      <Slot>
        <svg width="34" height="34" viewBox="0 0 34 34">
          <path d="M28.500 22.500q-3 7-10.500 7Q7.500 29.500 7 18.500 7.500 7 18 7q11 0 11 12H12.500" fill="none" stroke="#56c4f2" strokeWidth="6" />
          <path d="M5 30.500q-4-4 4-14T26 2.500q6-1 4.500 6" fill="none" stroke="#f5c322" strokeWidth="2.800" />
        </svg>
      </Slot>
      <Slot>
        <svg width="32" height="32" viewBox="0 0 32 32">
          <path d="M26 4l4 1v21l-6 4z" fill="#8a7d6d" />
          <path d="M11 3h17l-5 26-21-4z" fill="#7fbcc6" />
          <path d="M11 3h17l-2 9-19-1z" fill="#d5e6e8" />
          <path d="M9 8L2 25l9 1.700z" fill="#b8dde2" />
          <path d="M11 2h18" stroke="#aaa" strokeWidth="2" strokeDasharray="1.500 1" />
        </svg>
      </Slot>
      <Slot>
        <svg width="24" height="31" viewBox="0 0 24 31">
          <rect x="0.500" y="0.500" width="23" height="30" rx="1.500" fill="#b9d6ee" stroke="#6c9cc4" />
          <rect x="3" y="4" width="18" height="9" fill="#e7f1e9" stroke="#5d88ab" />
          <rect x="3" y="2" width="18" height="2" fill="#f0a840" />
          <rect x="15" y="6" width="3" height="5" fill="none" stroke="#333" strokeWidth="0.900" />
          {[0, 1, 2, 3].map((r) => [0, 1, 2, 3, 4].map((c) => <rect key={`${r}${c}`} x={3 + c * 3.8} y={16 + r * 3.5} width="2.300" height="2" fill="#5d8dba" />))}
          <rect x="18.200" y="22" width="2.800" height="6" fill="#ee9420" />
        </svg>
      </Slot>
      <div className="flex h-[38px] w-[58px] items-center justify-center rounded-[2px] border border-[#d8dadc] bg-[linear-gradient(150deg,#b7b9bb,#77797b_50%,#9c9ea0)] ml-[2px]">
        <svg width="32" height="34" viewBox="0 0 32 34">
          <circle cx="16" cy="16" r="14" fill="#fbd116" />
          <path d="M3.500 10A14 14 0 0 1 29 10H16L10 19z" fill="#e2382c" />
          <path d="M3.500 10l7 11q3 4 6 2L13 30A14 14 0 0 1 3.500 10z" fill="#3da648" />
          <circle cx="16" cy="16" r="6.500" fill="#fff" />
          <circle cx="16" cy="16" r="5.200" fill="#3b78c4" />
          <path d="M20 20q4-3 7 1 1 5-1 8l3 4H18l3-5q-2-5-1-8z" fill="#f4f4f4" />
        </svg>
      </div>
      <span className="ml-auto mr-[16px] -mt-[4px] tracking-[-0.400px]">DA</span>
      <i className="mt-[2px] border-x-[4px] border-b-[4px] border-x-transparent border-b-white" />
      <svg className="ml-[12px]" width="90" height="18" viewBox="0 0 90 18">
        <g fill="none" stroke="#fff" strokeWidth="1.500">
          <path d="M8 4H3v12h8v-3M6 2v2M10 1v4M13 1v4M8.500 5h6v3q0 3-3 3t-3-3zM11.500 11v3" />
          <path d="M35 6q2 3 0 6" />
          <path d="M55 5h9v8h-9M58 16h6M61 13v3M50 3v4M53 3v4M49 7h5v3h-5zM51.500 10v5h4" />
          <path d="M75 2v15" />
        </g>
        <path d="M9 6h5v2q0 2.500-2.500 2.500T9 8z" fill="#fff" />
        <path d="M26 7h3l4-4v12l-4-4h-3z" fill="#fff" />
        <path d="M76 3q4-1 6 1 2 1 4 0v7h-4l-6-1z" fill="#e8e8e8" />
        <circle cx="83" cy="12.500" r="4.800" fill="#dc2a20" />
        <path d="M81 10.500l4 4M85 10.500l-4 4" stroke="#fff" strokeWidth="1.500" />
      </svg>
      <div className="ml-[12px] w-[64px] pt-px text-center leading-[17px] tracking-[-0.450px]">
        14:37
        <br />
        15-10-2013
      </div>
      <div className="ml-[10px] h-full w-[14px] border border-[#6b7078] bg-[linear-gradient(135deg,#8b9096,#24282d_50%,#15181c)]" />
    </div>
  );
}

export default function App() {
  return (
    <div className="flex h-[800px] w-[1280px] flex-col overflow-hidden bg-white font-['Liberation_Sans',Arial,sans-serif]">
      <TabStrip />
      <Toolbar />
      <Header />
      <ActionBar />
      <div className="flex h-[565px] min-h-0">
        <Sidebar />
        <Week />
        <div className="relative h-full w-[30px] shrink-0 pl-[7px] pt-[207px]">
          <div className="h-[251px] w-[9px] border border-[#b5b5b5] bg-[#c8c8c8]" />
          <div className="absolute right-0 top-[273px] flex h-[17px] w-[10px] items-center justify-center border border-r-0 border-[#e5e5e5] bg-white">
            <i className="border-y-[4px] border-l-[4px] border-y-transparent border-l-[#777]" />
          </div>
        </div>
        <Tasks />
      </div>
      <Taskbar />
    </div>
  );
}
